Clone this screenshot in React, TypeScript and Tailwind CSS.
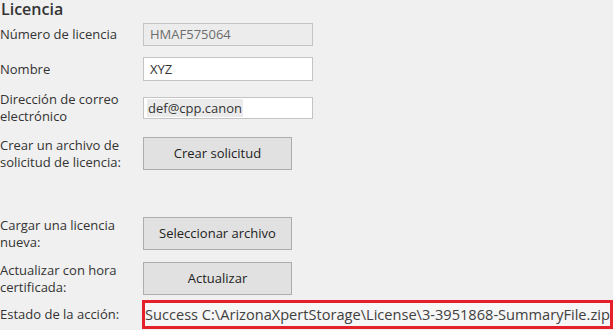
import React from "react";

const font = { fontFamily: '"Open Sans", "Noto Sans", sans-serif' };

function Label({ children }: { children: React.ReactNode }) {
    return <div className="w-[143px] shrink-0 text-[13px] leading-[17px] text-[#333]">{children}</div>;
}

function Btn({ text }: { text: string }) {
    return (
        <button className="w-[149px] h-[33px] bg-[#e1e1e1] border border-[#adadad] text-[13px] text-[#222]">
            {text}
        </button>
    );
}

export default function App() {
    return (
        <div className="w-[613px] h-[330px] bg-[#f0f0f0] overflow-hidden relative" style={font}>
            <div className="h-[20px] pl-[1px] text-[16px] leading-[18px] font-semibold text-[#333]">Licencia</div>

            {/* license number (read only) */}
            <div className="flex items-center mt-[3px] h-[23px]">
                <Label>Número de licencia</Label>
                <div className="w-[170px] h-[23px] border border-[#c4c4c4] bg-[#ececec] px-[6px] text-[13px] leading-[21px] text-[#6d6d6d]">
                    HMAF575064
                </div>
            </div>

            <div className="flex items-center mt-[11px] h-[24px]">
                <Label>Nombre</Label>
                <div className="w-[170px] h-[24px] border border-[#c4c4c4] bg-white px-[6px] text-[13px] leading-[22px] text-[#333]">
                    XYZ
                </div>
            </div>

            <div className="flex items-center mt-[9px] h-[36px]">
                <Label>Dirección de correo<br />electrónico</Label>
                <div className="w-[170px] h-[22px] border border-[#c4c4c4] bg-white px-[3px] py-[1px] text-[13px] leading-[18px] text-[#333]">
                    <span className="bg-[#ebebeb] px-[1px]">def@cpp.canon</span>
                </div>
            </div>

            <div className="flex items-center mt-[11px] h-[33px]">
                <Label>Crear un archivo de<br />solicitud de licencia:</Label>
                <Btn text="Crear solicitud" />
            </div>

            <div className="flex items-center mt-[47px] h-[33px]">
                <Label>Cargar una licencia<br />nueva:</Label>
                <Btn text="Seleccionar archivo" />
            </div>

            <div className="flex items-center mt-[12px] h-[33px]">
                <Label>Actualizar con hora<br />certificada:</Label>
                <Btn text="Actualizar" />
            </div>

            <div className="flex items-center mt-[5px] h-[29px]">
                <Label>Estado de la acción:</Label>
                <div className="w-[472px] h-[29px] -ml-[1px] border-[3px] border-[#e5202b] bg-[#f6f6f6] overflow-hidden whitespace-nowrap text-[14.6px] leading-[23px] text-[#404040]">
                    Success C:\ArizonaXpertStorage\License\3-3951868-SummaryFile.zip
                </div>
            </div>
        </div>
    );
}
